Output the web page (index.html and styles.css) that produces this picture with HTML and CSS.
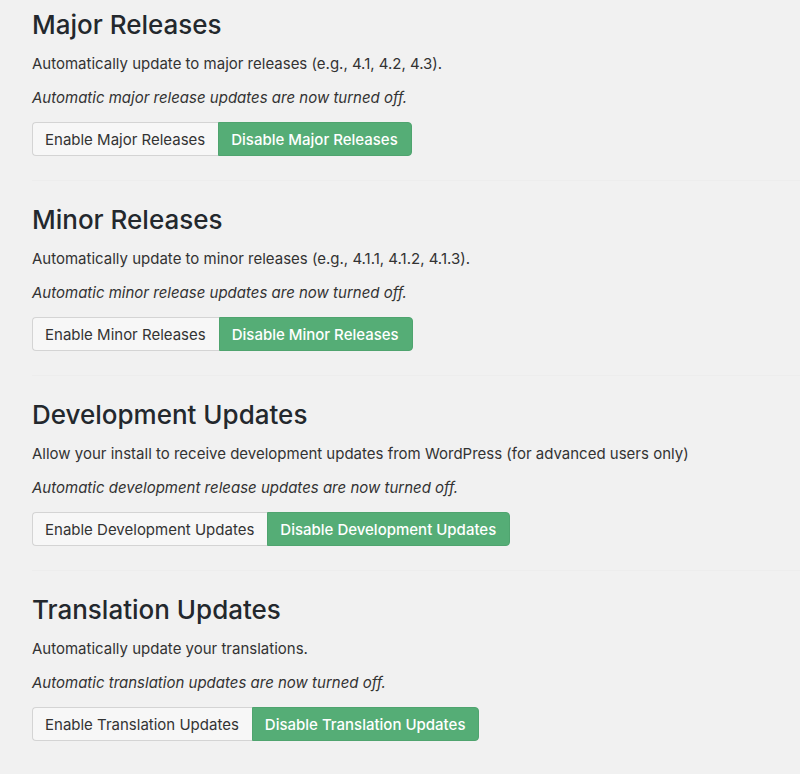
FILE: index.html
```html
<!DOCTYPE html>
<html lang="en">
<head>
    <meta charset="UTF-8">
    <title>Automatic Updates</title>
    <link rel="stylesheet" href="styles.css">
</head>
<body>
<div id="container">
    <div class="update_section">
        <h2 class="update_title">Major Releases</h2>
        <p class="update_desc">Automatically update to major releases (e.g., 4.1, 4.2, 4.3).</p>
        <p class="update_status">Automatic major release updates are now turned off.</p>
        <div class="btn_group">
            <button class="btn btn_enable">Enable Major Releases</button>
            <button class="btn btn_disable">Disable Major Releases</button>
        </div>
    </div>
    <div class="update_section">
        <h2 class="update_title">Minor Releases</h2>
        <p class="update_desc">Automatically update to minor releases (e.g., 4.1.1, 4.1.2, 4.1.3).</p>
        <p class="update_status">Automatic minor release updates are now turned off.</p>
        <div class="btn_group">
            <button class="btn btn_enable">Enable Minor Releases</button>
            <button class="btn btn_disable">Disable Minor Releases</button>
        </div>
    </div>
    <div class="update_section">
        <h2 class="update_title">Development Updates</h2>
        <p class="update_desc">Allow your install to receive development updates from WordPress (for advanced users only)</p>
        <p class="update_status">Automatic development release updates are now turned off.</p>
        <div class="btn_group">
            <button class="btn btn_enable">Enable Development Updates</button>
            <button class="btn btn_disable">Disable Development Updates</button>
        </div>
    </div>
    <div class="update_section">
        <h2 class="update_title">Translation Updates</h2>
        <p class="update_desc">Automatically update your translations.</p>
        <p class="update_status">Automatic translation updates are now turned off.</p>
        <div class="btn_group">
            <button class="btn btn_enable">Enable Translation Updates</button>
            <button class="btn btn_disable">Disable Translation Updates</button>
        </div>
    </div>
</div>
</body>
</html>
```

FILE: styles.css
```css
body{
    margin: 0;
    background-color: #f1f1f1;
    font-family: Inter, "Liberation Sans", Arial, sans-serif;
    color: #333;
}
#container{
    padding: 0 0 0 32px;
}
.update_section{
    padding: 23px 0 24px;
    border-bottom: 1px solid #ededed;
}
.update_section:first-child{
    padding-top: 9px;
}
.update_section:last-child{
    border-bottom: none;
}
.update_title{
    margin: 0;
    font-size: 26px;
    line-height: 32px;
    font-weight: 500;
    color: #23282d;
}
.update_desc,
.update_status{
    margin: 13px 0 0;
    font-size: 15px;
    line-height: 20px;
}
.update_status{
    margin-top: 14px;
    font-style: italic;
}
.btn_group{
    display: flex;
    margin-top: 14px;
}
.btn{
    height: 34px;
    padding: 0 13px 0 12px;
    font-family: inherit;
    font-size: 15px;
    border: 1px solid #d4d4d4;
}
.btn_enable{
    background-color: #f7f7f7;
    color: #333;
    border-radius: 4px 0 0 4px;
    border-right: none;
}
.btn_disable{
    background-color: #55ad76;
    border-color: #4fa46f;
    color: #fff;
    font-weight: 500;
    border-radius: 0 4px 4px 0;
}
```
